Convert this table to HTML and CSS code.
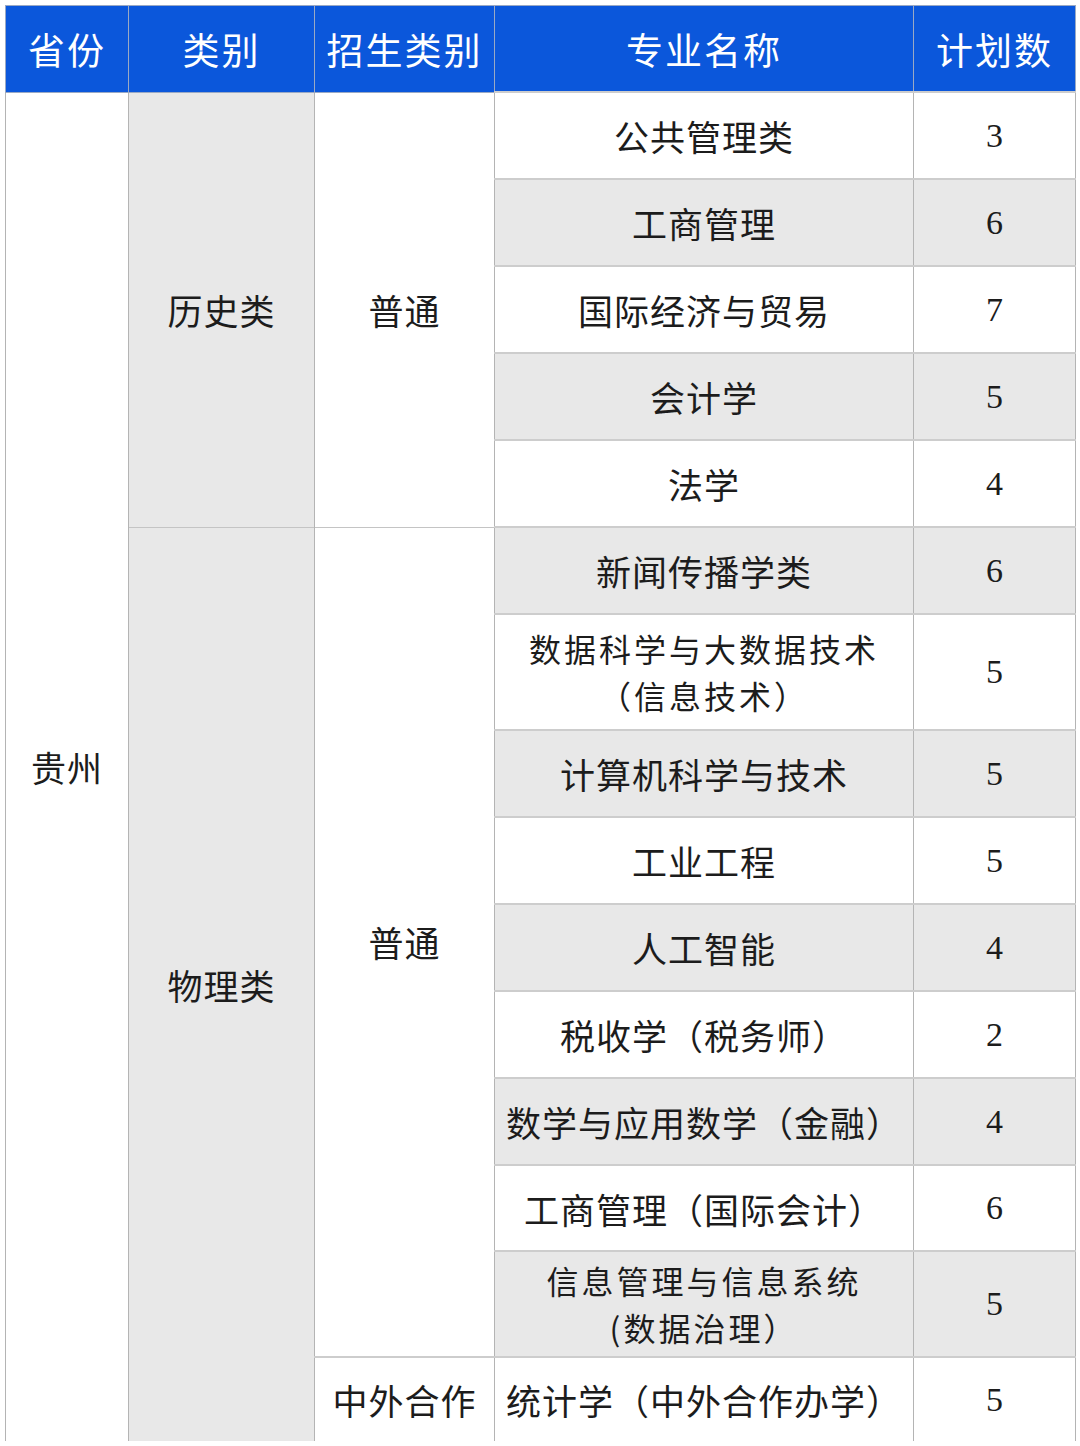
FILE: index.html
```html
<!DOCTYPE html>
<html lang="zh-CN">
<head>
<meta charset="utf-8">
<link rel="stylesheet" href="styles.css">
</head>
<body>
<table class="plan">
  <colgroup>
    <col class="c-prov"><col class="c-type"><col class="c-kind"><col class="c-major"><col class="c-num">
  </colgroup>
  <thead>
    <tr class="head">
      <th>省份</th><th>类别</th><th>招生类别</th><th>专业名称</th><th>计划数</th>
    </tr>
  </thead>
  <tbody>
    <tr class="r">
      <td rowspan="15" class="prov">贵州</td>
      <td rowspan="5" class="type">历史类</td>
      <td rowspan="5" class="kind">普通</td>
      <td class="major">公共管理类</td><td class="num">3</td>
    </tr>
    <tr class="r alt"><td class="major">工商管理</td><td class="num">6</td></tr>
    <tr class="r"><td class="major">国际经济与贸易</td><td class="num">7</td></tr>
    <tr class="r alt"><td class="major">会计学</td><td class="num">5</td></tr>
    <tr class="r"><td class="major">法学</td><td class="num">4</td></tr>
    <tr class="r alt">
      <td rowspan="10" class="type">物理类</td>
      <td rowspan="9" class="kind">普通</td>
      <td class="major">新闻传播学类</td><td class="num">6</td>
    </tr>
    <tr class="r tall"><td class="major two"><span class="ln">数据科学与大数据技术</span><span class="ln">（信息技术）</span></td><td class="num">5</td></tr>
    <tr class="r alt"><td class="major">计算机科学与技术</td><td class="num">5</td></tr>
    <tr class="r"><td class="major">工业工程</td><td class="num">5</td></tr>
    <tr class="r alt"><td class="major">人工智能</td><td class="num">4</td></tr>
    <tr class="r"><td class="major">税收学（税务师）</td><td class="num">2</td></tr>
    <tr class="r alt"><td class="major">数学与应用数学（金融）</td><td class="num">4</td></tr>
    <tr class="r r86"><td class="major">工商管理（国际会计）</td><td class="num">6</td></tr>
    <tr class="r alt mid"><td class="major two"><span class="ln">信息管理与信息系统</span><span class="ln">(数据治理）</span></td><td class="num">5</td></tr>
    <tr class="r last">
      <td class="kind coop">中外合作</td>
      <td class="major">统计学（中外合作办学）</td><td class="num">5</td>
    </tr>
  </tbody>
</table>
</body>
</html>
```

FILE: styles.css
```css
html, body {
  margin: 0;
  padding: 0;
  background: #ffffff;
}
body {
  padding: 5px 0 0 5px;
  font-family: "Liberation Serif", "Noto Sans CJK SC", serif;
  color: #1c1c1c;
}
.plan {
  border-collapse: collapse;
  table-layout: fixed;
  width: 1070px;
}
.c-prov { width: 123px; }
.c-type { width: 186px; }
.c-kind { width: 180px; }
.c-major { width: 419px; }
.c-num { width: 162px; }

.head th {
  height: 85px;
  padding: 0;
  background: #0b57db;
  color: #ffffff;
  font-family: "Noto Sans CJK SC", sans-serif;
  font-weight: 400;
  font-size: 37px;
  letter-spacing: 2px;
  text-align: center;
  vertical-align: middle;
  border: 1px solid #9aa9c4;
}
td {
  padding: 0;
  text-align: center;
  vertical-align: middle;
  font-family: "Noto Sans CJK SC", sans-serif;
  font-weight: 400;
  font-size: 35px;
  letter-spacing: 1px;
  border-left: 1px solid #b4b4b4;
  border-right: 1px solid #b4b4b4;
}
.r td.major, .r td.num {
  border-top: 2px solid #cdcdcd;
}
.r { height: 87px; }
.r.tall { height: 116px; }
.r.r86 { height: 86px; }
.r.mid { height: 106px; }
.r.last { height: 84px; }
.r.last td { border-bottom: none; }

.alt td.major, .alt td.num { background: #e8e8e8; }
.type { background: #e8e8e8; border-top: 1px solid #c4c4c4; }
.prov { background: #ffffff; }
.kind { background: #ffffff; border-top: 1px solid #c4c4c4; }
.coop { border-top: 2px solid #cdcdcd; }
.num {
  font-family: "Liberation Serif", serif;
  font-size: 34px;
  letter-spacing: 0;
}
.major.two .ln {
  display: block;
  font-size: 32px;
  letter-spacing: 3px;
  height: 47px;
  line-height: 47px;
}
tbody tr:first-child td { border-top: none; }
```
